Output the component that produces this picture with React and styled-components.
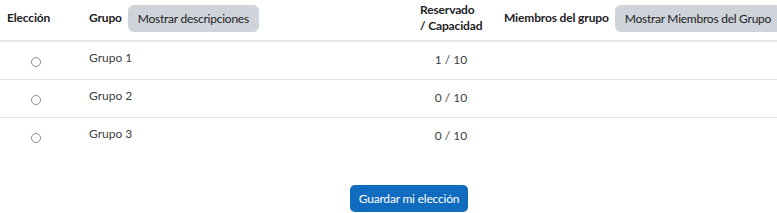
import React from "react";
import styled, { createGlobalStyle } from "styled-components";

const Global = createGlobalStyle`
  html, body { margin: 0; padding: 0; background: #fff; }
  body { font-family: "Lato", "Noto Sans", sans-serif; color: #1d2125; font-size: 12px; }
`;

const Page = styled.div`
  width: 777px;
  height: 213px;
  display: flex;
  flex-direction: column;
`;

const Table = styled.div`
  display: grid;
  grid-template-columns: 82px 331px 84px 280px;
`;

const HeadCell = styled.div`
  height: 36px;
  padding: 0 0 4px 7px;
  display: flex;
  align-items: center;
  gap: 6px;
  font-weight: 700;
  font-size: 12px;
  letter-spacing: -0.15px;
  line-height: 16px;
  white-space: nowrap;
  border-bottom: 2px solid #e6e8eb;
`;

const Cell = styled.div`
  height: 38px;
  padding: 0 ${p => p.$pr ?? 7}px 0 7px;
  display: flex;
  align-items: flex-start;
  padding-top: ${p => p.$pt || 8}px;
  box-sizing: border-box;
  justify-content: ${p => p.$align || "flex-start"};
  border-bottom: ${p => (p.$last ? "none" : "1px solid #dee2e6")};
  font-size: 12px;
  line-height: 16px;
  color: #3a3f44;
`;

const Radio = styled.span`
  width: 8px;
  height: 8px;
  border: 1.2px solid #8a8d91;
  border-radius: 50%;
  margin-left: 24px;
  margin-top: 4px;
`;

const GrayButton = styled.button`
  font-family: inherit;
  font-size: 12px;
  letter-spacing: -0.25px;
  font-weight: 400;
  color: #1d2125;
  background: #ced4da;
  border: none;
  border-radius: 6px;
  height: 27px;
  padding: 0 10px;
  white-space: nowrap;
`;

const Footer = styled.div`
  display: flex;
  justify-content: center;
  padding-top: 29px;
  padding-left: 41px;
`;

const PrimaryButton = styled.button`
  font-family: inherit;
  font-size: 12px;
  letter-spacing: -0.2px;
  color: #fff;
  background: #0f6cbf;
  border: none;
  border-radius: 5px;
  height: 27px;
  padding: 0 9px;
`;

const groups = [
  { name: "Grupo 1", count: "1 / 10" },
  { name: "Grupo 2", count: "0 / 10" },
  { name: "Grupo 3", count: "0 / 10" },
];

export default function App() {
  return (
    <Page>
      <Global />
      <Table>
        <HeadCell>Elección</HeadCell>
        <HeadCell>
          Grupo <GrayButton>Mostrar descripciones</GrayButton>
        </HeadCell>
        <HeadCell>
          Reservado
          <br />/ Capacidad
        </HeadCell>
        <HeadCell>
          Miembros del grupo <GrayButton>Mostrar Miembros del Grupo</GrayButton>
        </HeadCell>
        {groups.map((g, i) => {
          const last = i === groups.length - 1;
          return (
            <React.Fragment key={g.name}>
              <Cell $last={last} $pt={11}>
                <Radio />
              </Cell>
              <Cell $last={last}>{g.name}</Cell>
              <Cell $last={last} $pt={10} $pr={15} $align="center">{g.count}</Cell>
              <Cell $last={last} />
            </React.Fragment>
          );
        })}
      </Table>
      <Footer>
        <PrimaryButton>Guardar mi elección</PrimaryButton>
      </Footer>
    </Page>
  );
}
